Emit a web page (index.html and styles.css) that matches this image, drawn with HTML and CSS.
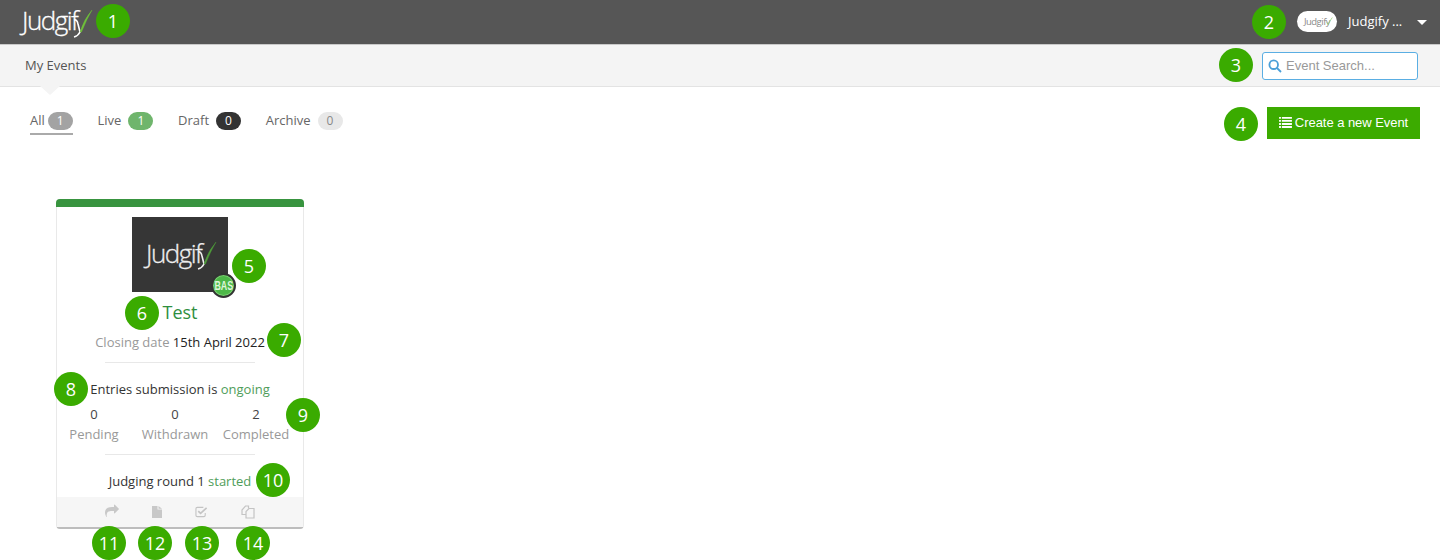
FILE: index.html
```html
<!DOCTYPE html>
<html lang="en">
<head>
  <meta charset="UTF-8">
  <title>My Events</title>
  <link rel="stylesheet" href="styles.css">
</head>
<body>
  <header class="topbar">
    <div class="logo">
      <span class="logo-text">Judgif</span>
      <svg class="logo-y" viewBox="0 0 20 28"><path class="y-arm" d="M1 10 Q4 9 5 14 L7 22 Q5 26 1 27"/><path class="y-tick" d="M7 22 Q11 9 19 0 Q13.500 9.500 8.500 22z"/></svg>
    </div>
    <div class="user">
      <div class="avatar">Judgify<svg viewBox="0 0 10 12"><path d="M1 8 L3 11 Q6 5 9 1" /></svg></div>
      <span class="user-name">Judgify ...</span>
      <span class="caret"></span>
    </div>
  </header>

  <nav class="subnav">
    <span class="subnav-title">My Events</span>
    <div class="search">
      <svg viewBox="0 0 14 14"><circle cx="5.7" cy="5.7" r="4.3"/><path d="M9 9 L13 13"/></svg>
      <span>Event Search...</span>
    </div>
  </nav>

  <main class="content">
    <div class="toolbar">
      <ul class="tabs">
        <li class="tab active">All <span class="pill pill-grey">1</span></li>
        <li class="tab">Live <span class="pill pill-green">1</span></li>
        <li class="tab">Draft <span class="pill pill-dark">0</span></li>
        <li class="tab">Archive <span class="pill pill-light">0</span></li>
      </ul>
      <button class="create-btn">
        <svg viewBox="0 0 14 12"><path d="M0 0h2v2H0zM3 0h11v2H3zM0 3.300h2v2H0zM3 3.300h11v2H3zM0 6.600h2v2H0zM3 6.600h11v2H3zM0 9.900h2v2H0zM3 9.900h11v2H3z"/></svg>
        <span>Create a new Event</span>
      </button>
    </div>

    <article class="card">
      <div class="card-top"></div>
      <div class="card-logo">
        <div class="card-logo-img">
          <span class="card-logo-text">Judgif</span>
          <svg class="card-logo-y" viewBox="0 0 20 28"><path class="y-arm" d="M1 10 Q4 9 5 14 L7 22 Q5 26 1 27"/><path class="y-tick" d="M7 22 Q11 9 19 0 Q13.500 9.500 8.500 22z"/></svg>
        </div>
        <span class="bas"><span class="bas-text">BAS</span></span>
      </div>
      <h2 class="card-title">Test</h2>
      <p class="closing"><span class="muted">Closing date</span> 15th April 2022</p>
      <hr class="divider">
      <p class="status">Entries submission is <span class="ok">ongoing</span></p>
      <div class="stats">
        <div class="stat"><span class="stat-num">0</span><span class="muted">Pending</span></div>
        <div class="stat"><span class="stat-num">0</span><span class="muted">Withdrawn</span></div>
        <div class="stat"><span class="stat-num">2</span><span class="muted">Completed</span></div>
      </div>
      <hr class="divider divider-low">
      <p class="status status-round">Judging round 1 <span class="ok">started</span></p>
      <div class="card-actions">
        <svg class="ico ico-share" viewBox="0 0 1792 1792"><path d="M1792 640q0 26-19 45l-512 512q-19 19-45 19t-45-19-19-45v-256h-224q-98 0-175.500 6t-154 21.500-133 42.500-105.500 69.500-80 101-48.500 138.500-17.500 181q0 55 5 123 0 6 2.500 23.500t2.500 26.500q0 15-8.500 25t-23.500 10q-16 0-28-17-7-9-13-22t-13.500-30-10.500-24q-127-285-127-451 0-199 53-333 162-403 875-403h224v-256q0-26 19-45t45-19 45 19l512 512q19 19 19 45z"/></svg>
        <svg class="ico ico-file" viewBox="0 0 10 12"><path d="M0 0h5.500v3.500H10V12H0zM6.500 0L10 2.800H6.500z"/></svg>
        <svg class="ico ico-check" viewBox="0 0 14 12"><path class="line" d="M11 7v2.500a1.500 1.500 0 0 1-1.500 1.500h-7A1.500 1.500 0 0 1 1 9.500v-7A1.500 1.500 0 0 1 2.500 1H9"/><path class="line thick" d="M3.500 5l2.500 2.500L12.500 1.500"/></svg>
        <svg class="ico ico-copy" viewBox="0 0 14 14"><path class="line" d="M5 9.500H1V5l3.500-4H7.500V3.500"/><path class="line" d="M5 9.500V6.500L8 3.500H13V13H5z"/></svg>
      </div>
    </article>
  </main>

  <!-- numbered callouts that sit over the screenshot -->
  <span class="mark m1">1</span>
  <span class="mark m2">2</span>
  <span class="mark m3">3</span>
  <span class="mark m4">4</span>
  <span class="mark m5">5</span>
  <span class="mark m6">6</span>
  <span class="mark m7">7</span>
  <span class="mark m8">8</span>
  <span class="mark m9">9</span>
  <span class="mark m10">10</span>
  <span class="mark m11">11</span>
  <span class="mark m12">12</span>
  <span class="mark m13">13</span>
  <span class="mark m14">14</span>
</body>
</html>
```

FILE: styles.css
```css
* {
  box-sizing: border-box;
}
html, body {
  margin: 0;
  height: 560px;
  overflow: hidden;
}
body {
  position: relative;
  font-family: "Open Sans", sans-serif;
  font-size: 13px;
  color: #333;
  background: #fff;
}

/* top bar */
.topbar {
  height: 45px;
  padding: 0 13px 2px 22px;
  background: #565656;
  border-bottom: 1px solid #c9c9c9;
  display: flex;
  align-items: center;
  justify-content: space-between;
}
.logo {
  position: relative;
  width: 70px;
  height: 30px;
  margin-top: -2px;
}
.logo-text {
  font-size: 26px;
  font-weight: 300;
  line-height: 30px;
  letter-spacing: -1.500px;
  color: #fff;
  -webkit-text-stroke: .3px #fff;
}
.logo-y {
  position: absolute;
  left: 51px;
  top: 5px;
  width: 20px;
  height: 28px;
}
.y-arm {
  fill: none;
  stroke: #fff;
  stroke-width: 1.600;
}
.y-tick {
  fill: #6fbf3a;
  stroke: #6fbf3a;
  stroke-width: .4;
}
.user {
  display: flex;
  align-items: center;
}
.avatar {
  width: 40px;
  height: 21px;
  margin-right: 11px;
  border-radius: 11px;
  background: #fff;
  color: #888;
  font-size: 9.500px;
  letter-spacing: -.5px;
  line-height: 21px;
  text-align: center;
  position: relative;
}
.avatar svg {
  position: absolute;
  right: 4px;
  top: 4px;
  width: 7px;
  height: 12px;
  fill: none;
  stroke: #8fce6a;
  stroke-width: 1;
}
.user-name {
  color: #fff;
  font-size: 13px;
  width: 56px;
  white-space: nowrap;
}
.caret {
  margin-left: 13px;
  margin-top: 2px;
  width: 0;
  height: 0;
  border-left: 5px solid transparent;
  border-right: 5px solid transparent;
  border-top: 5px solid #fff;
}

/* sub navigation */
.subnav {
  position: relative;
  height: 42px;
  padding: 0 22px 0 25px;
  background: #f4f4f4;
  border-bottom: 1px solid #e3e3e3;
  display: flex;
  align-items: center;
  justify-content: space-between;
}
.subnav::after {
  content: "";
  position: absolute;
  left: 40px;
  top: 41px;
  border-left: 10px solid transparent;
  border-right: 10px solid transparent;
  border-top: 9px solid #f4f4f4;
}
.subnav-title {
  font-size: 13px;
  color: #555;
  margin-bottom: 2px;
}
.search {
  width: 156px;
  height: 28px;
  padding-left: 5px;
  background: #fff;
  border: 1px solid #5aaee3;
  border-radius: 3px;
  display: flex;
  align-items: center;
  gap: 4px;
  font-family: "Liberation Sans", sans-serif;
  font-size: 13px;
  color: #999;
}
.search svg {
  width: 14px;
  height: 14px;
  fill: none;
  stroke: #4a9fd8;
  stroke-width: 1.800;
}

/* tabs and create */
.content {
  padding: 0 20px 0 30px;
}
.toolbar {
  height: 112px;
  padding-top: 20px;
  display: flex;
  justify-content: space-between;
  align-items: flex-start;
}
.tabs {
  list-style: none;
  margin: 5px 0 0;
  padding: 0;
  display: flex;
  gap: 24.700px;
}
.tab {
  height: 24px;
  font-size: 13px;
  line-height: 16px;
  color: #666;
  display: flex;
  gap: 7px;
}
.tab.active {
  height: 23px;
  gap: 3px;
  border-bottom: 2px solid #aaa;
}
.pill {
  width: 25px;
  height: 18px;
  border-radius: 9px;
  text-align: center;
  font-size: 12px;
  line-height: 18px;
  color: #fff;
}
.pill-grey { background: #a3a3a3; }
.pill-green { background: #6fb56c; }
.pill-dark { background: #333; }
.pill-light { background: #e8e8e8; color: #888; }
.create-btn {
  width: 153px;
  height: 32px;
  border: 0;
  background: #3cab00;
  color: #fff;
  font-family: "Liberation Sans", sans-serif;
  font-size: 13px;
  padding: 0;
  display: flex;
  align-items: center;
  justify-content: center;
  gap: 3px;
}
.create-btn span {
  margin-bottom: 2px;
  letter-spacing: -.05px;
}
.create-btn svg {
  width: 13px;
  height: 11px;
  margin-bottom: 2px;
  fill: #fff;
}

/* event card */
.card {
  width: 248px;
  height: 330px;
  margin-left: 26px;
  background: #fff;
  border: 1px solid #e9e9e9;
  border-bottom: 2px solid #bdbdbd;
  border-radius: 4px;
  text-align: center;
  display: flex;
  flex-direction: column;
}
.card p, .card h2 {
  margin: 0;
}
.card-top {
  height: 8px;
  margin: -1px -1px 0;
  background: #38943f;
  border-radius: 4px 4px 0 0;
}
.card-logo {
  position: relative;
  width: 96px;
  height: 75px;
  margin: 10px auto 0;
}
.card-logo-img {
  position: relative;
  height: 75px;
  background: #363636;
}
.card-logo-text {
  position: absolute;
  left: 14px;
  top: 20px;
  font-size: 26px;
  font-weight: 300;
  line-height: 32px;
  letter-spacing: -1.500px;
  color: #eee;
  -webkit-text-stroke: .3px #eee;
}
.card-logo-y {
  position: absolute;
  left: 65px;
  top: 25px;
  width: 20px;
  height: 28px;
}
.card-logo-y .y-tick {
  fill: #4f9d3a;
  stroke: #4f9d3a;
}
.card-logo-y .y-arm {
  stroke: #eee;
}
.bas {
  position: absolute;
  right: -8px;
  bottom: -6px;
  width: 25px;
  height: 25px;
  border-radius: 50%;
  background: #4db848;
  border: 2px solid #333;
  box-shadow: inset 0 0 0 1px #7ccf74;
  color: #dff5da;
  font-family: "Liberation Sans", sans-serif;
  font-size: 13px;
  font-weight: 700;
  line-height: 21px;
  display: flex;
  justify-content: center;
}
.bas-text {
  transform: scaleX(.68);
}
.card-title {
  margin-top: 7px !important;
  font-size: 18px;
  font-weight: 400;
  line-height: 26px;
  color: #2f8f3f;
}
.closing {
  margin-top: 8px !important;
  font-size: 13px;
  line-height: 18px;
  color: #222;
}
.muted {
  color: #999;
}
.divider {
  width: 150px;
  height: 1px;
  margin: 11px auto 0;
  border: 0;
  background: #e8e8e8;
}
.divider-low {
  margin-top: 10px;
}
.status {
  margin-top: 17px !important;
  font-size: 13px;
  line-height: 18px;
  color: #333;
}
.ok {
  color: #4f9d5a;
}
.stats {
  margin: 6px 0 0 -10px;
  display: grid;
  grid-template-columns: 81px 81px 81px;
  justify-content: center;
}
.stat {
  display: flex;
  flex-direction: column;
  font-size: 13px;
  line-height: 20px;
  white-space: nowrap;
}
.stat-num {
  color: #444;
}
.card-actions {
  position: relative;
  margin-top: auto;
  height: 30px;
  background: #f6f6f6;
}
.ico {
  position: absolute;
  fill: #c8c8c8;
}
.ico .line {
  fill: none;
  stroke: #c4c4c4;
  stroke-width: 1.200;
}
.ico .line.thick {
  stroke-width: 1.800;
}
.ico-share { left: 48px; top: 7px; width: 14px; height: 14px; }
.ico-file { left: 95px; top: 9px; width: 10px; height: 12px; }
.ico-check { left: 138px; top: 9px; width: 13px; height: 12px; }
.ico-copy { left: 184px; top: 8px; width: 14px; height: 14px; }

/* numbered callouts */
.mark {
  position: absolute;
  width: 34px;
  height: 34px;
  border-radius: 50%;
  background: #3aab00;
  color: #fff;
  font-size: 18px;
  line-height: 34px;
  text-align: center;
}
.m1 { left: 96px; top: 4px; }
.m2 { left: 1252px; top: 5px; }
.m3 { left: 1219px; top: 48px; }
.m4 { left: 1224px; top: 107px; }
.m5 { left: 232px; top: 249px; }
.m6 { left: 125px; top: 296px; }
.m7 { left: 267px; top: 323px; }
.m8 { left: 54px; top: 372px; }
.m9 { left: 286px; top: 398px; }
.m10 { left: 256px; top: 463px; }
.m11 { left: 92px; top: 526px; }
.m12 { left: 138px; top: 526px; }
.m13 { left: 185px; top: 526px; }
.m14 { left: 236px; top: 526px; }
```
